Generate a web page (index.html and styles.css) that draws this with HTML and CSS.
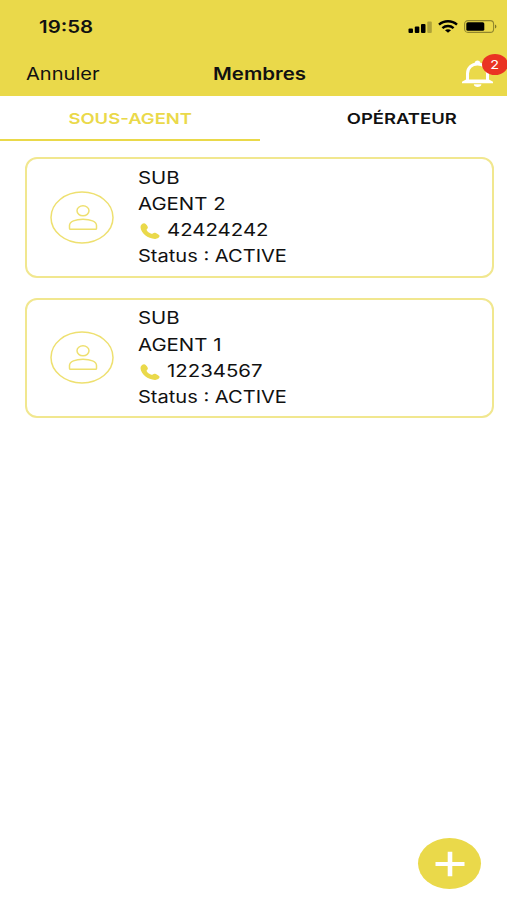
FILE: index.html
```
<!DOCTYPE html>
<html lang="fr">
<head>
    <meta charset="UTF-8">
    <title>Membres</title>
    <link rel="stylesheet" href="styles.css">
</head>
<body>
<div class="screen">
    <header>
        <div class="status-bar">
            <span class="wide time">19:58</span>
            <div class="status-icons">
                <svg class="signal" width="24" height="12" viewBox="0 0 24 12">
                    <rect x="0.5" y="7.5" width="4.5" height="4.5" rx="1"/>
                    <rect x="6.8" y="5.5" width="4.5" height="6.5" rx="1"/>
                    <rect x="13" y="3" width="4.5" height="9" rx="1"/>
                    <rect x="19.3" y="0.5" width="4.5" height="11.5" rx="1" opacity="0.25"/>
                </svg>
                <svg class="wifi" width="20" height="13" viewBox="0 0 20 13">
                    <g fill="none" stroke="#000" stroke-width="2.4">
                        <path d="M1 4.6C6 0.1 14 0.1 19 4.6"/>
                        <path d="M4.4 8.1C7.6 5.2 12.4 5.2 15.6 8.1"/>
                    </g>
                    <path d="M7 10.3C8.8 8.9 11.2 8.9 13 10.3L10 12.8z"/>
                </svg>
                <svg class="battery" width="33" height="13" viewBox="0 0 33 13">
                    <rect x="0.6" y="0.6" width="29" height="11.8" rx="3.4" fill="none" stroke="#000" stroke-opacity="0.38" stroke-width="1.1"/>
                    <rect x="2.3" y="2.2" width="18" height="8.6" rx="1.6"/>
                    <path d="M31 4.5C32.9 5.2 32.9 7.8 31 8.5z" opacity="0.45"/>
                </svg>
            </div>
        </div>
        <div class="nav-bar">
            <span class="wide cancel">Annuler</span>
            <span class="wide title">Membres</span>
            <div class="bell">
                <svg width="31" height="28" viewBox="0 0 31 28">
                    <path d="M5.5 21V13.5C5.5 7.8 9.8 4 15.5 4S25.5 7.8 25.5 13.5V21" fill="none" stroke="#fff" stroke-width="3"/>
                    <path d="M12.6 4.5V3C12.6 -0.4 18.4 -0.4 18.4 3V4.5z" fill="#fff"/>
                    <path d="M0 23.2V21.8L4 19.5H27L31 21.8V23.2z" fill="#fff"/>
                    <path d="M11.8 24.2H19.4C19.4 27.8 11.8 27.8 11.8 24.2z" fill="#fff"/>
                </svg>
                <span class="badge"><span class="wide">2</span></span>
            </div>
        </div>
    </header>

    <nav class="tabs">
        <div class="tab active"><span class="wide">SOUS-AGENT</span></div>
        <div class="tab"><span class="wide">OPÉRATEUR</span></div>
    </nav>

    <main>
        <div class="card">
            <svg class="avatar" width="64" height="53" viewBox="0 0 64 53">
                <ellipse cx="32" cy="26.5" rx="31" ry="25.4"/>
                <ellipse cx="33" cy="19.8" rx="6" ry="5"/>
                <path d="M20.5 38.3H45.5C46.2 38.3 46.5 38 46.5 37.4V34.5C46.5 30.5 40.5 28.3 33 28.3S19.5 30.5 19.5 34.5V37.4C19.5 38 19.8 38.3 20.5 38.3z"/>
            </svg>
            <div class="info">
                <div><span class="wide">SUB</span></div>
                <div><span class="wide">AGENT 2</span></div>
                <div class="phone">
                    <svg width="20" height="16" viewBox="0 0 20 16">
                        <path d="M0.5 4.2C0.3 2 2.3 0.2 4.3 0.2C5.6 0.2 7.9 3.2 7.9 4.4C7.9 5.6 6.2 6 6.6 7.1C7.4 8.8 9.2 10.2 11.3 10.8C12.7 11.2 13.2 9.8 14.5 9.8C15.9 9.8 19.6 11.8 19.6 13.1C19.6 14.7 17.2 16 15 15.9C7.8 15.6 1 10.2 0.5 4.2z"/>
                    </svg>
                    <span class="wide">42424242</span>
                </div>
                <div><span class="wide status">Status : ACTIVE</span></div>
            </div>
        </div>

        <div class="card">
            <svg class="avatar" width="64" height="53" viewBox="0 0 64 53">
                <ellipse cx="32" cy="26.5" rx="31" ry="25.4"/>
                <ellipse cx="33" cy="19.8" rx="6" ry="5"/>
                <path d="M20.5 38.3H45.5C46.2 38.3 46.5 38 46.5 37.4V34.5C46.5 30.5 40.5 28.3 33 28.3S19.5 30.5 19.5 34.5V37.4C19.5 38 19.8 38.3 20.5 38.3z"/>
            </svg>
            <div class="info">
                <div><span class="wide">SUB</span></div>
                <div><span class="wide">AGENT 1</span></div>
                <div class="phone">
                    <svg width="20" height="16" viewBox="0 0 20 16">
                        <path d="M0.5 4.2C0.3 2 2.3 0.2 4.3 0.2C5.6 0.2 7.9 3.2 7.9 4.4C7.9 5.6 6.2 6 6.6 7.1C7.4 8.8 9.2 10.2 11.3 10.8C12.7 11.2 13.2 9.8 14.5 9.8C15.9 9.8 19.6 11.8 19.6 13.1C19.6 14.7 17.2 16 15 15.9C7.8 15.6 1 10.2 0.5 4.2z"/>
                    </svg>
                    <span class="wide">12234567</span>
                </div>
                <div><span class="wide status">Status : ACTIVE</span></div>
            </div>
        </div>
    </main>

    <footer>
        <div class="add-button">
            <svg width="30" height="26" viewBox="0 0 30 26">
                <path d="M0.5 11H12.7V0.8H17.3V11H29.5V15H17.3V25.2H12.7V15H0.5z" fill="#fff"/>
            </svg>
        </div>
    </footer>
</div>
</body>
</html>
```
FILE: styles.css
```
:root {
    --main-color: #ead94a;
    --border-color: #f1e78f;
    --avatar-color: #eee070;
    --badge-color: #ea3323;
    --text-color: #111;
}

body {
    margin: 0;
    font-family: Inter, "Liberation Sans", sans-serif;
    font-size: 17px;
    color: var(--text-color);
    background-color: #fff;
}

.screen {
    display: flex;
    flex-direction: column;
    height: 900px;
    overflow: hidden;
}

/* wide letterforms */
.wide {
    display: inline-block;
    white-space: nowrap;
    transform: scaleX(1.2);
    transform-origin: left center;
}

header {
    height: 96px;
    background-color: var(--main-color);
}

.status-bar {
    display: flex;
    justify-content: space-between;
    align-items: center;
    height: 53px;
    padding: 0 10px 0 39px;
}

.time {
    font-size: 17px;
    font-weight: 600;
}

.status-icons {
    display: flex;
    align-items: center;
    gap: 6px;
}

.nav-bar {
    display: grid;
    grid-template-columns: 187px 1fr auto;
    align-items: center;
    height: 41px;
    padding: 0 14px 0 26px;
}

.cancel,
.status {
    transform: scaleX(1.18);
}

.title {
    font-weight: 600;
}

.bell {
    position: relative;
    height: 28px;
}

.badge {
    position: absolute;
    top: -6px;
    left: 20px;
    width: 26px;
    height: 21px;
    line-height: 21px;
    border-radius: 50%;
    background-color: var(--badge-color);
    color: #fff;
    font-size: 12px;
    text-align: center;
}

.badge .wide {
    transform-origin: center;
}

.tabs {
    display: flex;
    height: 45px;
}

.tab {
    box-sizing: border-box;
    width: 260px;
    flex-shrink: 0;
    padding-left: 23px;
    line-height: 45px;
    font-size: 15px;
    font-weight: 600;
    text-align: center;
}

.tab .wide {
    transform: scaleX(1.23);
    transform-origin: center;
}

.tab.active {
    padding-left: 0;
    color: var(--main-color);
    border-bottom: 2px solid var(--main-color);
}

main {
    flex-grow: 1;
    display: flex;
    flex-direction: column;
    gap: 20px;
    padding: 16px 13px 0 25px;
}

.card {
    display: flex;
    align-items: center;
    gap: 24px;
    box-sizing: border-box;
    height: 120.5px;
    padding-left: 23px;
    border: 2px solid var(--border-color);
    border-radius: 12px;
}

.avatar {
    fill: none;
    stroke: var(--avatar-color);
    stroke-width: 1.5;
}

.info {
    line-height: 26.2px;
}

.phone {
    display: flex;
    align-items: center;
    gap: 7px;
    padding-left: 2px;
}

.phone svg {
    fill: var(--main-color);
}

.phone svg {
    margin-top: 2px;
}

footer {
    display: flex;
    justify-content: flex-end;
    padding: 0 26px 11px 0;
}

.add-button {
    display: flex;
    align-items: center;
    justify-content: center;
    width: 63px;
    height: 51px;
    border-radius: 50%;
    background-color: var(--main-color);
}
```
